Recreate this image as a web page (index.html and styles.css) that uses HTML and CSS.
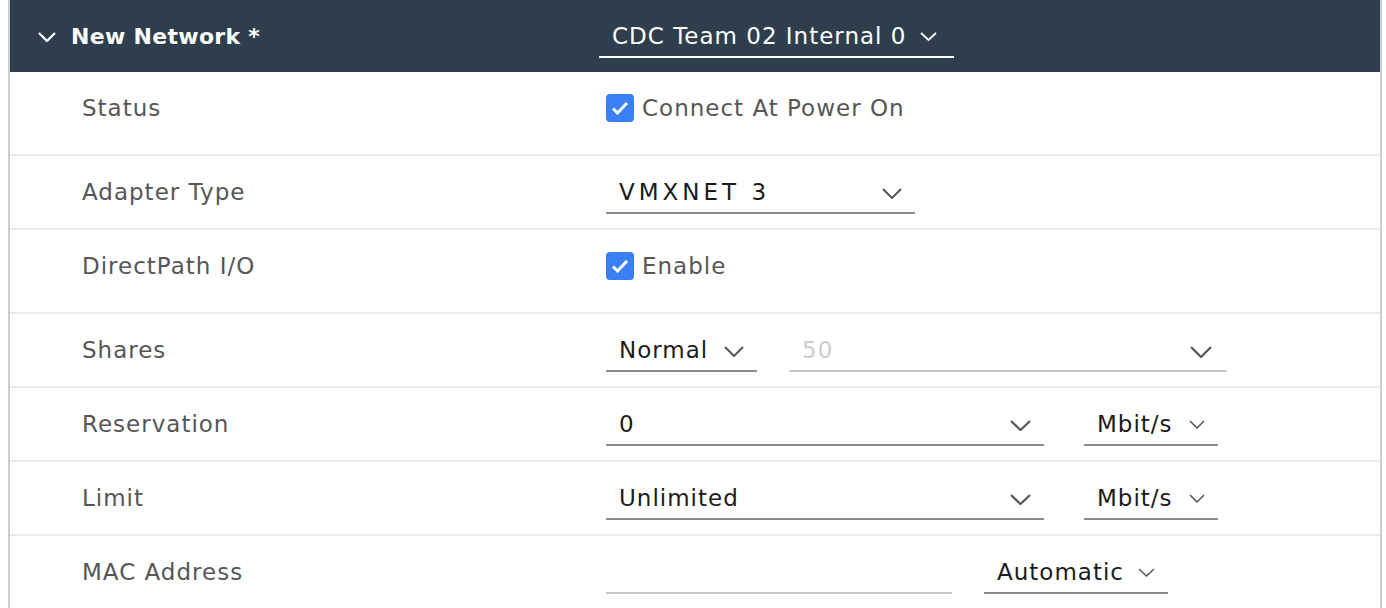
FILE: index.html
```html
<!DOCTYPE html>
<html>
<head>
<meta charset="utf-8">
<link rel="stylesheet" href="styles.css">
</head>
<body>
<div class="panel">
  <div class="header">
    <div class="title">
      <svg class="hchev" width="18" height="10" viewBox="0 0 18 10"><path d="M1 1 L9 9 L17 1" fill="none" stroke="#fff" stroke-width="2.2"/></svg>
      <span>New Network *</span>
    </div>
    <div class="hselect">
      <span>CDC Team 02 Internal 0</span>
      <svg width="17" height="9" viewBox="0 0 17 9"><path d="M1 1 L8.5 8 L16 1" fill="none" stroke="#fff" stroke-width="1.8"/></svg>
    </div>
  </div>

  <div class="row tall">
    <div class="label">Status</div>
    <div class="ctrl">
      <label class="check"><span class="box"><svg width="18" height="14" viewBox="0 0 18 14"><path d="M2 7.5 L6.5 12 L16 2" fill="none" stroke="#fff" stroke-width="3"/></svg></span>Connect At Power On</label>
    </div>
  </div>

  <div class="row">
    <div class="label">Adapter Type</div>
    <div class="ctrl">
      <div class="select w309"><span class="caps">VMXNET 3</span><svg class="chev" width="20" height="11" viewBox="0 0 20 11"><path d="M1 1 L10 10 L19 1" fill="none" stroke="#565656" stroke-width="2"/></svg></div>
    </div>
  </div>

  <div class="row tall">
    <div class="label">DirectPath I/O</div>
    <div class="ctrl">
      <label class="check"><span class="box"><svg width="18" height="14" viewBox="0 0 18 14"><path d="M2 7.5 L6.5 12 L16 2" fill="none" stroke="#fff" stroke-width="3"/></svg></span>Enable</label>
    </div>
  </div>

  <div class="row">
    <div class="label">Shares</div>
    <div class="ctrl gap32">
      <div class="select w151"><span>Normal</span><svg class="chev" width="20" height="11" viewBox="0 0 20 11"><path d="M1 1 L10 10 L19 1" fill="none" stroke="#565656" stroke-width="2"/></svg></div>
      <div class="select w438 disabled"><span>50</span><svg class="chev" width="22" height="12" viewBox="0 0 22 12"><path d="M1 1 L11 11 L21 1" fill="none" stroke="#565656" stroke-width="2.2"/></svg></div>
    </div>
  </div>

  <div class="row">
    <div class="label">Reservation</div>
    <div class="ctrl gap40">
      <div class="select w438"><span>0</span><svg class="chev" width="21" height="11" viewBox="0 0 21 11"><path d="M1 1 L10.5 10 L20 1" fill="none" stroke="#565656" stroke-width="2.2"/></svg></div>
      <div class="select w134"><span>Mbit/s</span><svg class="chev" width="16" height="9" viewBox="0 0 16 9"><path d="M1 1 L8 8 L15 1" fill="none" stroke="#565656" stroke-width="1.5"/></svg></div>
    </div>
  </div>

  <div class="row">
    <div class="label">Limit</div>
    <div class="ctrl gap40">
      <div class="select w438"><span>Unlimited</span><svg class="chev" width="21" height="11" viewBox="0 0 21 11"><path d="M1 1 L10.5 10 L20 1" fill="none" stroke="#565656" stroke-width="2.2"/></svg></div>
      <div class="select w134"><span>Mbit/s</span><svg class="chev" width="16" height="9" viewBox="0 0 16 9"><path d="M1 1 L8 8 L15 1" fill="none" stroke="#565656" stroke-width="1.5"/></svg></div>
    </div>
  </div>

  <div class="row last">
    <div class="label">MAC Address</div>
    <div class="ctrl gap32">
      <div class="input w346"></div>
      <div class="select w184"><span>Automatic</span><svg class="chev" width="17" height="9" viewBox="0 0 17 9"><path d="M1 1 L8.5 8 L16 1" fill="none" stroke="#565656" stroke-width="1.5"/></svg></div>
    </div>
  </div>
</div>
</body>
</html>
```

FILE: styles.css
```css
html, body {
  margin: 0;
  padding: 0;
  background: #fff;
}
body {
  padding: 0 4px 0 8px;
  font-family: "DejaVu Sans", "Open Sans", sans-serif;
  font-size: 23px;
  letter-spacing: 1px;
}
.panel {
  width: 1370px;
  border-left: 2px solid #cccccc;
  border-right: 2px solid #cccccc;
  height: 608px;
  overflow: hidden;
}
.header {
  height: 72px;
  background: #2f3e4c;
  display: flex;
  align-items: flex-start;
  color: #fff;
}
.title {
  width: 589px;
  display: flex;
  align-items: center;
  height: 72px;
  padding-left: 28px;
  box-sizing: border-box;
  font-size: 22px;
  font-weight: bold;
  letter-spacing: 0.3px;
}
.title .hchev {
  margin-right: 15px;
  margin-top: 2px;
}
.hselect {
  margin-top: 22px;
  width: 355px;
  height: 36px;
  box-sizing: border-box;
  border-bottom: 2px solid #fff;
  display: flex;
  align-items: flex-start;
  padding-left: 13px;
  line-height: 29px;
}
.hselect svg {
  margin-left: 14px;
  margin-top: 10px;
}
.row {
  display: flex;
  align-items: flex-start;
  height: 72px;
  box-sizing: content-box;
  border-bottom: 2px solid #ebebeb;
}
.row.tall {
  height: 82px;
}
.row.last {
  border-bottom: none;
}
.label {
  width: 524px;
  padding-left: 72px;
  padding-top: 22px;
  line-height: 29px;
  color: #565656;
}
.ctrl {
  display: flex;
  align-items: flex-start;
  padding-top: 22px;
}
.gap32 { gap: 32px; }
.gap40 { gap: 40px; }
.check {
  display: flex;
  align-items: center;
  line-height: 29px;
  color: #565656;
}
.box {
  width: 28px;
  height: 28px;
  border-radius: 4px;
  background: #3b7ff5;
  display: flex;
  align-items: center;
  justify-content: center;
  margin-right: 8px;
  margin-top: -2px;
}
.select {
  height: 36px;
  box-sizing: border-box;
  border-bottom: 2px solid #8c8c8c;
  display: flex;
  justify-content: space-between;
  align-items: flex-start;
  padding: 0 13px;
  line-height: 29px;
  color: #1b1b1b;
}
.select .caps {
  letter-spacing: 4px;
}
.select .chev {
  margin-top: 10px;
}
.select.disabled {
  color: #cccccc;
  border-bottom-color: #c8c8c8;
  padding-right: 15px;
}
.input {
  height: 36px;
  box-sizing: border-box;
  border-bottom: 2px solid #c8c8c8;
}
.w309 { width: 309px; }
.w151 { width: 151px; }
.w438 { width: 438px; }
.w134 { width: 134px; }
.w346 { width: 346px; }
.w184 { width: 184px; }
```
